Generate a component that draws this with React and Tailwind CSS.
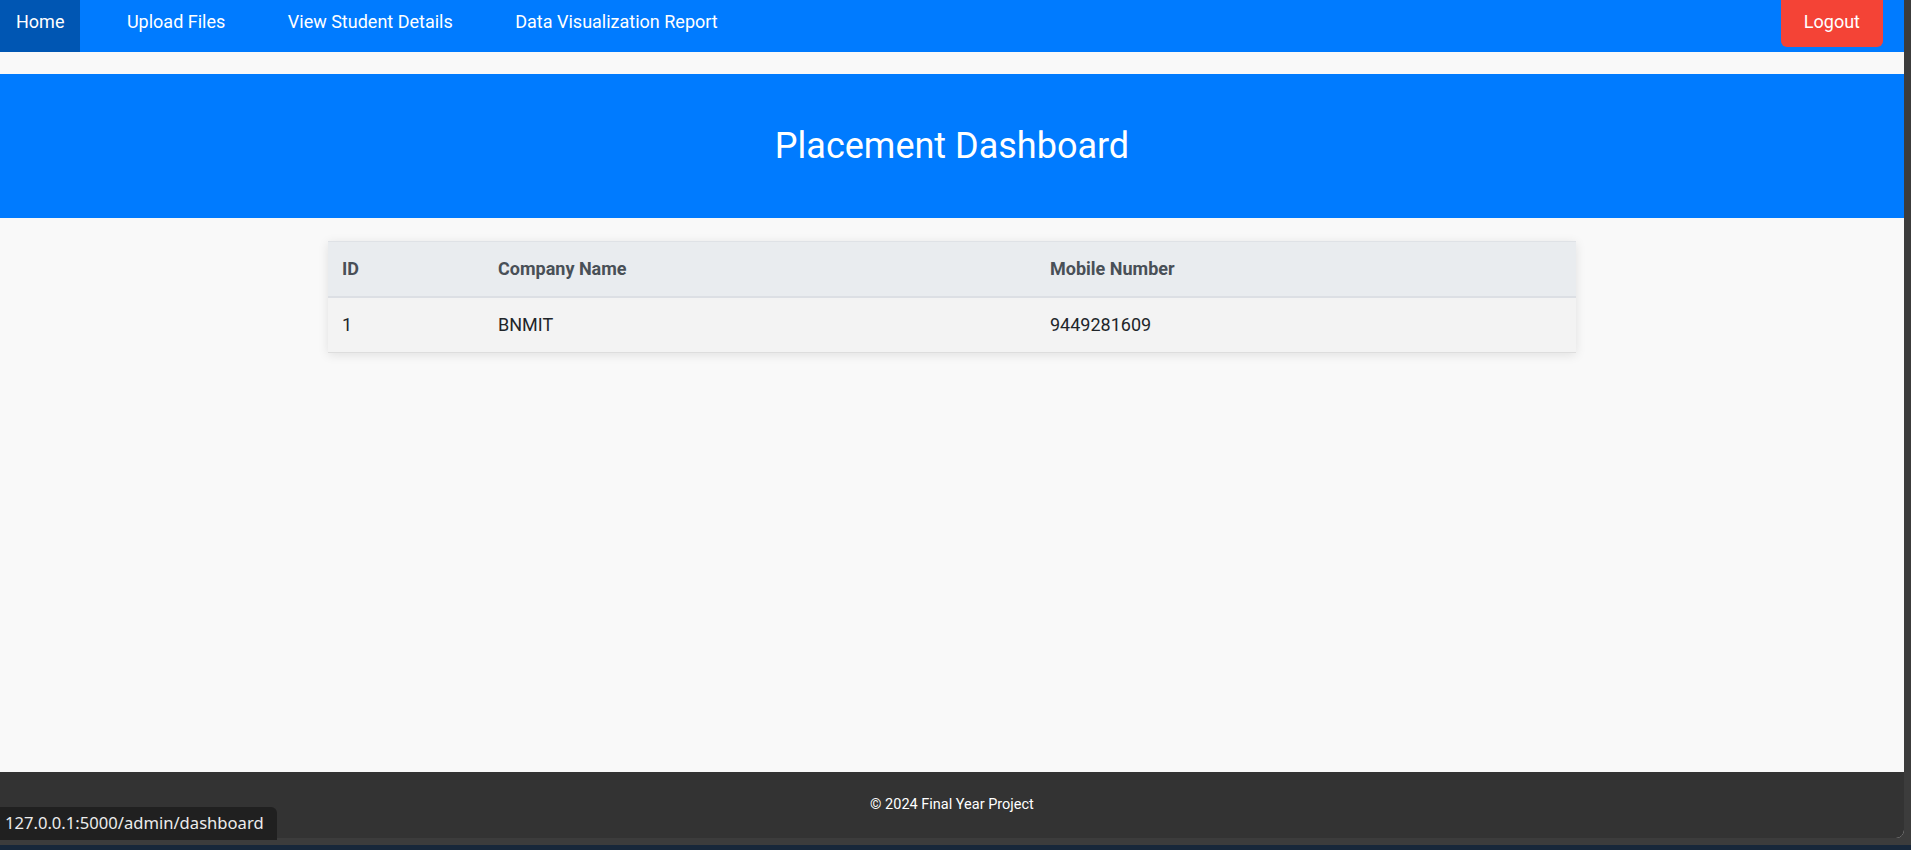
import React from 'react';

const links = ['Home', 'Upload Files', 'View Student Details', 'Data Visualization Report'];

const companies = [{ id: 1, name: 'BNMIT', mobile: '9449281609' }];

export default function App() {
  return (
    <div className="h-[850px] overflow-hidden bg-[#17273a] font-['Roboto',sans-serif]">
      <div className="relative h-[845px] flex pr-[7px] pb-[7px] bg-[#3c3c3c]">
        <div className="flex-1 flex flex-col bg-[#f9f9f9] rounded-br-[8px] overflow-hidden">
          {/* navbar */}
          <nav className="h-[52px] shrink-0 flex items-stretch bg-[#007bff] text-white text-[18px]">
            <div className="flex gap-[30.5px]">
              {links.map((label, i) => (
                <a
                  key={label}
                  href="#"
                  className={
                    i === 0
                      ? 'px-4 pt-[11px] leading-[21px] bg-[#0056b3]'
                      : 'px-4 pt-[11px] leading-[21px]'
                  }
                >
                  {label}
                </a>
              ))}
            </div>
            <button className="ml-auto mr-[21px] self-start h-[47px] px-[23px] pt-[11px] pb-[15px] leading-[21px] rounded-b-[6px] bg-[#f44336] text-white text-[18px]">
              Logout
            </button>
          </nav>

          {/* page header */}
          <header className="mt-[22px] h-[144px] shrink-0 flex items-center justify-center bg-[#007bff]">
            <h1 className="text-[36px] font-normal text-white">Placement Dashboard</h1>
          </header>

          {/* table */}
          <main className="flex-1 pt-[23px]">
            <table className="w-[1248px] mx-auto border-collapse text-[18px] shadow-[0_2px_10px_rgba(0,0,0,0.1)]">
              <thead>
                <tr className="bg-[#e9ecef] text-[#495057] border-t border-t-[#dfe2e6] border-b-2 border-b-[#dcdfe4]">
                  <th className="w-[156px] px-[14px] py-[15px] leading-[24px] text-left font-bold">ID</th>
                  <th className="w-[552px] px-[14px] py-[15px] leading-[24px] text-left font-bold">Company Name</th>
                  <th className="px-[14px] py-[15px] leading-[24px] text-left font-bold">Mobile Number</th>
                </tr>
              </thead>
              <tbody>
                {companies.map((c) => (
                  <tr key={c.id} className="bg-[#f3f3f3] text-[#212529] border-b border-b-[#dddddd]">
                    <td className="px-[14px] py-[15px] leading-[24px]">{c.id}</td>
                    <td className="px-[14px] py-[15px] leading-[24px]">{c.name}</td>
                    <td className="px-[14px] py-[15px] leading-[24px]">{c.mobile}</td>
                  </tr>
                ))}
              </tbody>
            </table>
          </main>

          {/* footer */}
          <footer className="h-[66px] shrink-0 flex items-center justify-center bg-[#333333] text-white text-[14.5px]">
            © 2024 Final Year Project
          </footer>
        </div>

        {/* browser status bubble */}
        <div className="absolute left-0 top-[807px] h-[33px] w-[277px] pl-[5px] flex items-center rounded-tr-[6px] bg-[#202020] text-[#ececec] text-[16.6px] font-['Noto_Sans',sans-serif]">
          127.0.0.1:5000/admin/dashboard
        </div>
      </div>
    </div>
  );
}
